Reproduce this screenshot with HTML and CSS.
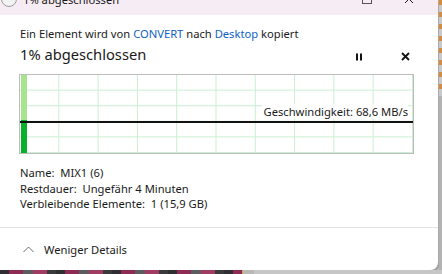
FILE: index.html
```html
<!DOCTYPE html>
<html lang="de">
<head>
    <meta charset="UTF-8">
    <meta name="viewport" content="width=device-width, initial-scale=1.0">
    <title>1% abgeschlossen</title>
    <link rel="stylesheet" href="styles.css">
</head>
<body>
    <div class="screen">
        <div class="window">
            <!-- Title bar (mostly scrolled off the top) -->
            <div class="titlebar">
                <span class="app-icon"></span>
                <span class="title">1% abgeschlossen</span>
                <span class="caption-max"></span>
                <svg class="caption-close" width="10" height="10" viewBox="0 0 10 10">
                    <path d="M1 1 L9 9 M9 1 L1 9" stroke="#1a1a1a" stroke-width="1"/>
                </svg>
            </div>

            <div class="content">
                <p class="summary">Ein Element wird von <a href="#">CONVERT</a> nach <a href="#">Desktop</a> kopiert</p>

                <div class="status-row">
                    <h1>1% abgeschlossen</h1>
                    <button class="icon-btn" title="Anhalten">
                        <svg width="8" height="8" viewBox="0 0 8 8">
                            <rect x="1" y="0.5" width="2" height="7" fill="#111"/>
                            <rect x="5" y="0.5" width="2" height="7" fill="#111"/>
                        </svg>
                    </button>
                    <button class="icon-btn close-btn" title="Abbrechen">
                        <svg width="9" height="9" viewBox="0 0 9 9">
                            <path d="M1 1 L8 8 M8 1 L1 8" stroke="#111" stroke-width="1.8"/>
                        </svg>
                    </button>
                </div>

                <div class="graph">
                    <div class="progress"></div>
                    <div class="speed-line"></div>
                    <span class="speed-label">Geschwindigkeit: 68,6 MB/s</span>
                </div>

                <div class="details">
                    <div>Name:&nbsp; MIX1 (6)</div>
                    <div>Restdauer:&nbsp; Ungefähr 4 Minuten</div>
                    <div>Verbleibende Elemente:&nbsp; 1 (15,9 GB)</div>
                </div>
            </div>

            <div class="footer">
                <svg width="11" height="7" viewBox="0 0 11 7">
                    <path d="M0.5 6 L5.5 1 L10.5 6" stroke="#6a6a6a" stroke-width="1" fill="none"/>
                </svg>
                <span>Weniger Details</span>
            </div>
        </div>
        <div class="edge"></div>
    </div>

    <!-- Desktop peeking out below the dialog -->
    <div class="desktop">
        <div class="wallpaper"></div>
        <div class="taskbar"></div>
    </div>
</body>
</html>
```

FILE: styles.css
```css
/* General Styles */
body {
    margin: 0;
    font-family: 'Segoe UI', 'Noto Sans', sans-serif;
    font-size: 11.2px;
    color: #1a1a1a;
    background: #c4c4c4;
    overflow: hidden;
}

.screen {
    display: flex;
    height: 270px;
    overflow: hidden;
}

/* Window */
.window {
    width: 439px;
    height: 287px;
    margin-top: -17px;
    display: flex;
    flex-direction: column;
    background: white;
    border-right: 1px solid #a8a8a8;
    border-bottom-right-radius: 8px;
    box-sizing: border-box;
    box-shadow: 1px 1px 2px rgba(0, 0, 0, 0.25);
}

.edge {
    flex: 1;
    background:
        repeating-linear-gradient(to bottom, #d88a3a 0 5px, #c9c9c9 5px 12px) top / 100% 96px no-repeat,
        #b3b3b3;
}

/* Title bar */
.titlebar {
    height: 32px;
    flex-shrink: 0;
    display: flex;
    align-items: center;
    background: #f6ecf4;
}

.app-icon {
    width: 14px;
    height: 14px;
    margin-left: 1px;
    border: 1px solid #9c9c9c;
    border-radius: 50%;
    background: #f2f2f2;
}

.title {
    margin-left: 6px;
    flex: 1;
}

.caption-max {
    width: 8px;
    height: 8px;
    border: 1px solid #555;
    margin-right: 32px;
}

.caption-close {
    margin-right: 24px;
}

/* Content */
.content {
    flex: 1;
    padding: 11px 0 0 20px;
}

.summary {
    margin: 0;
    line-height: 16px;
}

.summary a {
    color: #0f62c6;
    text-decoration: none;
}

.status-row {
    display: flex;
    align-items: center;
    height: 20px;
    margin-top: 2px;
    padding-right: 23px;
}

.status-row h1 {
    flex: 1;
    margin: 0;
    font-size: 14.7px;
    font-weight: normal;
    line-height: 20px;
}

.icon-btn {
    width: 20px;
    height: 20px;
    padding: 5px 0 0;
    border: none;
    background: none;
    display: flex;
    justify-content: center;
    align-items: center;
}

.close-btn {
    margin-left: 26px;
}

/* Speed graph */
.graph {
    position: relative;
    width: 395px;
    height: 80px;
    margin: 10px 0 0 -1px;
    box-sizing: border-box;
    border: 1px solid #bdbdbd;
    background-image:
        linear-gradient(to right, transparent calc(100% - 1px), #c9eed2 0),
        linear-gradient(to bottom, transparent calc(100% - 1px), #c9eed2 0);
    background-size: 39.3px 15.6px;
}

.progress {
    position: absolute;
    left: 1px;
    top: 0;
    bottom: 0;
    width: 6px;
    background: linear-gradient(to bottom, #a8e38f 0 45px, #07b02a 45px);
}

.speed-line {
    position: absolute;
    left: 0;
    right: 0;
    top: 46px;
    height: 2px;
    background: #111;
}

.speed-label {
    position: absolute;
    right: 5px;
    top: 29px;
    line-height: 15px;
    padding-left: 2px;
    background: white;
}

/* Details */
.details {
    margin-top: 11px;
    line-height: 15.5px;
}

/* Footer */
.footer {
    height: 43px;
    flex-shrink: 0;
    display: flex;
    align-items: center;
    gap: 10px;
    padding-left: 23px;
    box-sizing: border-box;
    border-top: 1px solid #e3e3e3;
}

/* Desktop strip */
.desktop {
    display: flex;
    height: 4px;
}

.wallpaper {
    width: 242px;
    border-right: 1px solid #d9a534;
    background: repeating-linear-gradient(90deg, #2e2e33 0 9px, #8d2b55 9px 23px, #5d5d60 23px 33px, #a23b62 33px 47px, #3a3a3a 47px 56px);
}

.taskbar {
    flex: 1;
    background: linear-gradient(to right, #b9b9b9 0 11px, #c6c6c6 11px);
}
```
